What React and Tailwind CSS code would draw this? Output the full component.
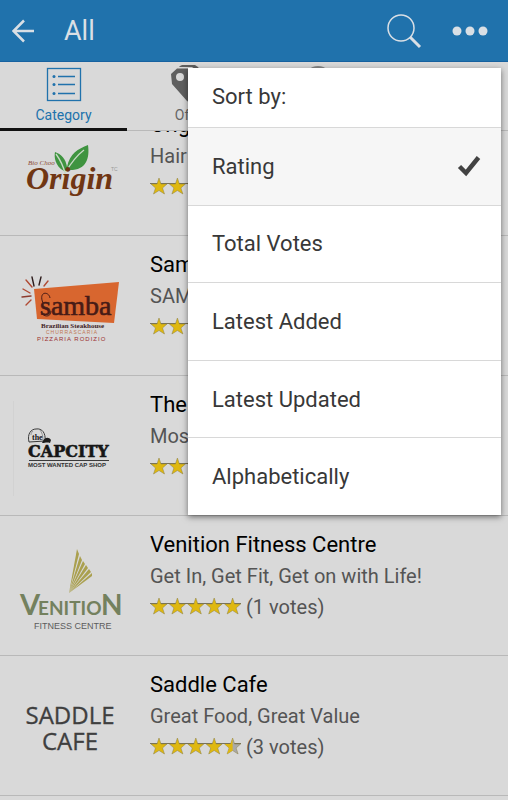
import { useState } from 'react';

const SORT_OPTIONS = ['Rating', 'Total Votes', 'Latest Added', 'Latest Updated', 'Alphabetically'];

const STAR = '9,0 11,6 17,6 12.5,10 14.5,16 9,12.5 3.5,16 5.5,10 1,6 7,6';

function OriginLogo() {
  return (
    <svg viewBox="0 0 150 140" className="w-[150px] h-[140px]" aria-label="Bio Choo Origin">
      <path d="M64 75 C55 70 54 61 55 56 C61 58 66 63 67 71 C70 57 78 53 88 49 C90 63 86 75 68 74 Z" fill="#3f9440" />
      <path d="M56 58 C61 65 63 69 65 77 C71 67 76 60 84 54" fill="none" stroke="#c9d9c6" strokeWidth="1.3" />
      <text x="28" y="69" fontSize="7" fontFamily="'Liberation Serif', serif" fontStyle="italic" fill="#8b4a34">Bio Choo</text>
      <text x="26" y="93" fontSize="32" fontFamily="'Liberation Serif', serif" fontStyle="italic" fontWeight="700" fill="#703613">Origin</text>
      <text x="111" y="75" fontSize="5" fontFamily="'Liberation Sans', sans-serif" fill="#9a9a9a">TC</text>
    </svg>
  );
}

function SambaLogo() {
  return (
    <svg viewBox="0 0 150 140" className="w-[150px] h-[140px]" aria-label="Samba Brazilian Steakhouse">
      <path d="M34 53 L119 46 L114 87 L37 83 Z" fill="#d8662f" />
      <g fill="none" strokeLinecap="round" strokeWidth="1.4">
        <path d="M32 51 L26 44 M26 69 L31 64 M44 50 L48 45 M30 57 L23 53" stroke="#b04a33" />
        <path d="M39 49 L41 41 M34 50 L32 41" stroke="#2e1c1c" />
        <path d="M31 60 L22 61" stroke="#8d3c2f" />
      </g>
      <text x="40" y="79" fontSize="28" fontFamily="'Liberation Serif', serif" fill="#471b16" stroke="#471b16" strokeWidth="0.6">samba</text>
      <path d="M43 67 C38 55 49 55 50 62 M51 75 C51 82 43 81 41 76" fill="none" stroke="#471b16" />
      <text x="41" y="92" fontSize="7" fontFamily="'Liberation Serif', serif" fontWeight="700" fill="#40231f">Brazilian Steakhouse</text>
      <text x="46" y="98" fontSize="5" fontFamily="'Liberation Sans', sans-serif" letterSpacing="1" fill="#c07653">CHURRASCARIA</text>
      <text x="37" y="105" fontSize="6" fontFamily="'Liberation Sans', sans-serif" letterSpacing="1" fill="#9b3030">PIZZARIA RODIZIO</text>
    </svg>
  );
}

function CapcityLogo() {
  return (
    <svg viewBox="0 0 150 140" className="w-[150px] h-[140px]" aria-label="The Capcity">
      <path d="M13.500 25 V120" stroke="#d2d2d2" />
      <path d="M29 66 C27 58 31 53 36 53 C42 52 46 57 45 65 Z" fill="#d9d9d9" stroke="#3b3b3b" />
      <path d="M33 55 C31 57 31 58 31 59 M40 54 C43 58 43 62 43 66" fill="none" stroke="#777" strokeWidth="0.7" />
      <path d="M43 65 C45 61 49 61 51 64 L50 67 C47 66 45 67 42 67 Z" fill="#1c1c1c" />
      <text x="32" y="64" fontSize="8" fontFamily="'Liberation Serif', serif" fontWeight="700" fill="#161616">the</text>
      <text x="28" y="81" fontSize="16" fontFamily="'DejaVu Serif', serif" fontWeight="700" fill="#161616" stroke="#161616" strokeWidth="0.6">CAPCITY</text>
      <path d="M29 84.500 H109" stroke="#3b3b3b" />
      <text x="28" y="91" fontSize="6" fontFamily="'Liberation Sans', sans-serif" fontWeight="700" fill="#303030">MOST WANTED CAP SHOP</text>
    </svg>
  );
}

function VenitionLogo() {
  return (
    <svg viewBox="0 0 150 140" className="w-[150px] h-[140px]" aria-label="Venition Fitness Centre">
      <g fill="#aaa04f">
        <path d="M69 77 L77 33 L79 38 Z" />
        <path d="M69 77 L80 40 L82 44 Z" />
        <path d="M69 77 L83 45 L85 48 Z" />
        <path d="M69 77 L86 49 L88 52 Z" />
        <path d="M69 77 L89 53 L91 56 Z" />
        <path d="M69 77 L92 57 L92 60 L84 66 Z" />
      </g>
      <g fontFamily="Lato, sans-serif" fontWeight="700" fill="#74815e">
        <text x="20" y="99" fontSize="29">V</text>
        <text x="38" y="99" fontSize="19">ENITIO</text>
        <text x="101" y="99" fontSize="28">N</text>
      </g>
      <text x="34" y="113" fontSize="9" fontFamily="'Liberation Sans', sans-serif" fill="#5c5c5c">FITNESS CENTRE</text>
    </svg>
  );
}

function SaddleLogo() {
  return (
    <svg viewBox="0 0 150 140" className="w-[150px] h-[140px]" aria-label="Saddle Cafe">
      <g fontFamily="'Open Sans', sans-serif" fontSize="24" fill="#3f3f3f" stroke="#3f3f3f" strokeWidth="0.3" textAnchor="middle">
        <text x="70" y="68">SADDLE</text>
        <text x="70" y="94">CAFE</text>
      </g>
    </svg>
  );
}

const PLACES = [
  { name: 'Origin', tagline: 'Hair', rating: 5, votes: 1, Logo: OriginLogo },
  { name: 'Samba', tagline: 'SAMBA', rating: 5, votes: 1, Logo: SambaLogo },
  { name: 'The Capcity', tagline: 'Most Wanted Cap Shop', rating: 5, votes: 1, Logo: CapcityLogo },
  { name: 'Venition Fitness Centre', tagline: 'Get In, Get Fit, Get on with Life!', rating: 5, votes: 1, Logo: VenitionLogo },
  { name: 'Saddle Cafe', tagline: 'Great Food, Great Value', rating: 4.5, votes: 3, Logo: SaddleLogo },
];

function Stars({ rating }) {
  return (
    <svg viewBox="0 0 92 18" className="w-[92px] h-[18px]" aria-label={`${rating} stars`}>
      <path d="M0 5.500 H91" stroke="#77715a" />
      {[0, 1, 2, 3, 4].map(i => (
        <g key={i} transform={`translate(${i * 18.4} 0)`}>
          <polygon points={STAR} fill={rating >= i + 1 ? '#dfb810' : '#a9a9a9'} stroke="#8c8043" strokeWidth="0.5" />
          {rating === i + 0.5 && <polygon points="9,0 9,12.5 3.5,16 5.5,10 1,6 7,6" fill="#dfb810" />}
        </g>
      ))}
    </svg>
  );
}

function PlaceRow({ place }) {
  const { name, tagline, rating, votes, Logo } = place;
  return (
    <li className="flex h-[140px] border-b border-[#b9b9b9]">
      <div className="w-[150px] shrink-0">
        <Logo />
      </div>
      <div className="flex-1 min-w-0 pt-[13px]">
        <h2 className="text-[22px] leading-8 text-black truncate">{name}</h2>
        <p className="text-[20px] leading-[31px] text-[#545454] truncate">{tagline}</p>
        <div className="flex items-center gap-1">
          <Stars rating={rating} />
          <span className="text-[20px] leading-[30px] text-[#545454]">({votes} votes)</span>
        </div>
      </div>
    </li>
  );
}

export default function App() {
  const [sort, setSort] = useState('Rating');

  return (
    <div className="relative min-h-screen bg-[#d9d9d9] font-[Roboto,sans-serif]">
      {/* Top bar */}
      <header className="flex items-center h-[62px] pl-2 pr-5 bg-[#2072ac] border-b border-[#1762a0] text-[#d9dfe5]">
        <button aria-label="Back" className="p-1">
          <svg viewBox="0 0 24 24" className="w-6 h-6" fill="none" stroke="currentColor" strokeWidth="2.500">
            <path d="M22 12 H2 M12 1.500 L1.500 12 L12 22.500" />
          </svg>
        </button>
        <h1 className="flex-1 pl-6 text-[27px] leading-9">All</h1>
        <button aria-label="Search" className="mr-[30px]">
          <svg viewBox="0 0 36 36" className="w-9 h-9" fill="none" stroke="currentColor">
            <circle cx="15" cy="15" r="13" strokeWidth="1.500" />
            <path d="M24 24 L34 34" strokeWidth="3" />
          </svg>
        </button>
        <button aria-label="More">
          <svg viewBox="0 0 36 10" className="w-9 h-[10px]" fill="currentColor">
            <circle cx="5" cy="5" r="4.500" />
            <circle cx="18" cy="5" r="4.500" />
            <circle cx="31" cy="5" r="4.500" />
          </svg>
        </button>
      </header>

      {/* Tabs */}
      <nav className="grid grid-cols-4 h-[69px] text-[14px] leading-5 text-[#666666]">
        <button className="flex flex-col items-center pt-1 border-b-3 border-[#111111] text-[#2072ac]">
          <svg viewBox="0 0 36 36" className="w-9 h-9" fill="none" stroke="currentColor">
            <rect x="1.500" y="2.500" width="33" height="32" strokeWidth="1.300" />
            <path d="M12 10.500 H29 M12 18.500 H29 M12 27.500 H29" strokeWidth="1.300" />
            <g fill="currentColor" stroke="none">
              <circle cx="8" cy="10.500" r="1.500" />
              <circle cx="8" cy="18.500" r="1.500" />
              <circle cx="8" cy="27.500" r="1.500" />
            </g>
          </svg>
          <span className="pt-[3px]">Category</span>
        </button>
        <button className="flex flex-col items-center pt-[3px] border-b border-[#b9b9b9]">
          <svg viewBox="0 0 40 40" className="w-10 h-10" fill="#5f5f5f">
            <path d="M9 1 L11 0 H24 L27 2 L39 20 L36 23 L24 4 L21 2 H8 Z" />
            <path fillRule="evenodd" d="M0 9 L6 3.500 L21 3.500 L36 25 L23 40 L16 36 L1 19 Z M9 8 A4 4 0 1 0 9 16 A4 4 0 1 0 9 8 Z" />
          </svg>
          <span>Offer</span>
        </button>
        <button className="flex flex-col items-center pt-1 border-b border-[#b9b9b9]" aria-label="Nearby">
          <svg viewBox="0 0 36 36" className="w-9 h-9" fill="#888888">
            <path fillRule="evenodd" d="M18 0 C10 0 5 6 5 13 C5 20 18 35 18 35 C18 35 31 20 31 13 C31 6 26 0 18 0 Z M18 7 A6 6 0 1 1 18 19 A6 6 0 1 1 18 7 Z" />
          </svg>
        </button>
        <div className="border-b border-[#b9b9b9]" />
      </nav>

      {/* Places, scrolled a little under the tabs */}
      <main className="overflow-hidden">
        <ul className="-mt-[35px] [clip-path:inset(35px_0_0_0)]">
          {PLACES.map(p => (
            <PlaceRow key={p.name} place={p} />
          ))}
        </ul>
      </main>

      {/* Sort menu */}
      <div role="menu" className="absolute top-[68px] right-[7px] flex flex-col w-[313px] h-[447px] bg-white text-[22px] text-[#383838] shadow-[0_2px_6px_rgba(0,0,0,0.5)]">
        <p className="h-[59px] px-6 leading-[58px]">Sort by:</p>
        {SORT_OPTIONS.map(option => (
          <button
            key={option}
            role="menuitemradio"
            aria-checked={sort === option}
            onClick={() => setSort(option)}
            className="flex flex-1 items-center justify-between w-full pl-6 pr-5 border-t border-[#d8d8d8] aria-checked:bg-[#f6f6f6]"
          >
            {option}
            {sort === option && (
              <svg viewBox="0 0 24 22" className="w-6 h-[22px]" fill="none" stroke="#424242" strokeWidth="4.500">
                <path d="M2.500 11.500 L9 18 L21.500 2.500" />
              </svg>
            )}
          </button>
        ))}
      </div>
    </div>
  );
}
